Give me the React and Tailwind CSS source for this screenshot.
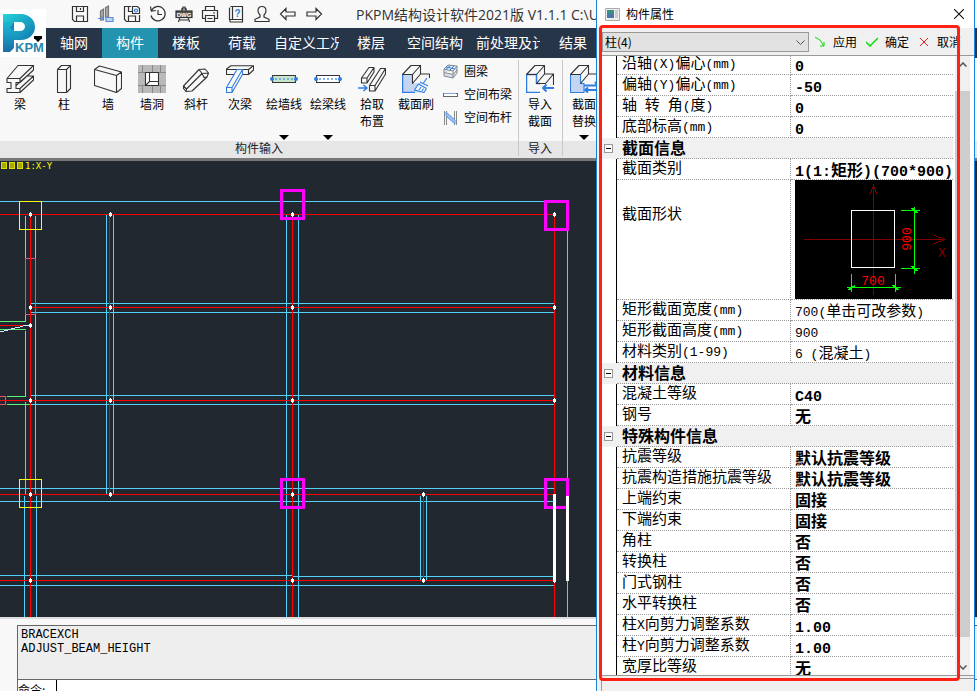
import React from "react";

const UI = "font-['Open_Sans','Noto_Sans_CJK_SC',sans-serif]";

/* ---------- quick access icons ---------- */

function Small({ children, label }) {
  return (
    <button aria-label={label} className="flex h-7 w-[26px] items-center justify-center">
      <svg width="18" height="18" viewBox="0 0 18 18" fill="none" stroke="#333" strokeWidth="1.2">
        {children}
      </svg>
    </button>
  );
}

function QuickAccess() {
  return (
    <div className="flex shrink-0 pl-[21px]">
      <Small label="保存">
        <path d="M1.5 1.5h15v15h-13l-2-2zM5.5 1.5v5h7v-5M5.5 16v-5h7v5M9.5 3v2" />
      </Small>
      <Small label="模型">
        <path d="M3.500 15V6l3-2v11zM8.500 12V2.500l3-1.500v11z" fill="#aaa" stroke="#777" />
        <path d="M1 13.500h5M4 11.500l2.500 2L4 15.500M9 12.500h7v4H9z" fill="#c3d5ec" stroke="#5a8fd6" />
      </Small>
      <Small label="另存">
        <path d="M8 1.5H1.5v13l2 2h13V10M5.500 1.500v5H9M5.500 16v-5h7v5" />
        <path d="M9.500 8.500V1.500h5l2 2v5z" />
        <circle cx="13" cy="5.500" r="1.500" stroke="#2f7de1" />
      </Small>
      <Small label="历史">
        <path d="M2.500 5.500a7.200 7.200 0 1 1-.5 5M1.500 1.500l.8 4.500 4.500-.5M9 5v4.500h4" />
      </Small>
      <Small label="DWG">
        <path d="M3.500 17L8 2h2l4.500 15M6 4h6M5 15h8" />
        <rect x="1" y="6" width="16" height="6.500" fill="#555" />
        <text x="9" y="11.500" fontSize="6" fontWeight="700" fill="#fff" stroke="none" textAnchor="middle" fontFamily="Liberation Sans">DWG</text>
      </Small>
      <Small label="打印">
        <path d="M4.500 5.500v-4h9v4M4.500 13.500h-3v-8h15v8h-3M4.500 10.500h9v6h-9zM6.500 13.500h5M12 8h2" />
      </Small>
      <Small label="帮助">
        <path d="M3.500 1.500h12v13h-12a1.500 1.500 0 0 0 0 2.500h12v-2M2.500 15V2.500M5.500 1.500v13" />
        <text x="10.500" y="11.500" fontSize="10" fontWeight="700" fill="#2f7de1" stroke="none" textAnchor="middle" fontFamily="Liberation Sans">?</text>
      </Small>
      <Small label="用户">
        <path d="M9 1.500c-3 0-4 2-4 4.200 0 2 1 3.300 2 4.300v2l-5 2.300v2.200h14v-2.200L11 12v-2c1-1 2-2.300 2-4.300 0-2.200-1-4.200-4-4.200z" />
      </Small>
      <Small label="撤销">
        <path d="M1.500 9l5.500-5.500V7h9v4H7v3.500z" />
      </Small>
      <Small label="重做">
        <path d="M16.500 9L11 3.500V7H2v4h9v3.500z" />
      </Small>
    </div>
  );
}

function Logo() {
  return (
    <button aria-label="PKPM" className="h-12 w-[46px] bg-white">
      <svg width="46" height="48" viewBox="0 0 46 48">
        <defs>
          <linearGradient id="pg" x1="0" y1="0" x2="0" y2="1">
            <stop offset="0" stopColor="#1fcbd6" />
            <stop offset=".5" stopColor="#1aa0c8" />
            <stop offset="1" stopColor="#1b6ea5" />
          </linearGradient>
          <linearGradient id="pb" x1="0" y1="0" x2="1" y2="1">
            <stop offset="0" stopColor="#25d3da" />
            <stop offset="1" stopColor="#1277b0" />
          </linearGradient>
        </defs>
        <path d="M3 5h11v34l-4 4H3z" fill="url(#pg)" />
        <path d="M3 5h18a14 13 0 0 1 0 26h-7v-9h6a5 4.500 0 0 0 0-9H3z" fill="url(#pb)" />
        <path d="M14 13v9l-4-3z" fill="#1588b8" />
        <text x="15" y="43" fontSize="13" fontWeight="700" fill="#2a86a8" fontFamily="Liberation Sans">KPM</text>
        <path d="M34 27h8v3h-1l-3 3-3-3h-1z" fill="#000" />
      </svg>
    </button>
  );
}

/* ---------- ribbon icons ---------- */

const I = {
  beam: (
    <path d="M1 13.500H14V17.500H10V23.500H14V27.500H1V23.500H5V17.500H1zM1 13.500L12 .5H27.500L14 13.500M27.500 .5V5L14 17.500M21 11H27.500L14 23.500M27.500 11V15L14 27.500M10 20.500L21 11V11" />
  ),
  column: <path d="M7.500 4.500H16.500V27.500H7.500zM7.500 4.500L11.500 .5H20.500L16.500 4.500M20.500 .5V23.500L16.500 27.500" />,
  wall: <path d="M.5 4.500L22.500 10.500V27.500L.5 20.500zM.5 4.500L5.500 1L27.500 7L22.500 10.500M27.500 7V23.500L22.500 27.500" />,
  hole: (
    <>
      <path d="M0 0H28V28H0z" fill="#b9b9b9" stroke="none" />
      <path d="M0 7.500H28M0 20.500H28M4.500 0V7M22.500 0V7M4.500 20V28M22.500 20V28M14.500 0V7M14.500 20V28" stroke="#888" strokeWidth="1" />
      <path d="M7.500 7.500H20.500V20.500H7.500z" fill="#fff" />
      <path d="M11.500 7.500V16.500H20.500M11.500 16.500L7.500 20.500" />
    </>
  ),
  brace: <path d="M1.500 21L17 4.500L23 4L26.500 8L25 12L10 26L4 26.500L1.500 23.500zM17 4.500L20 8.500L26.500 8M20 8.500L4.500 24L1.500 21M4.500 24L4 26.500M20 8.500L22 12.500L25 12" />,
  sub: (
    <>
      <path d="M.5 4L5 .8H27.500V5L22.500 9.500H.5zM.5 4.500H22.500L27.500 .8M22.500 4.500V9.500" />
      <path d="M.5 22.500L11 4.500H16.500V9.500L6 27.500H.5zM.5 22.500H6V27.500M6 22.500L16.500 4.500" stroke="#2f7de1" fill="#f8f8f8" />
    </>
  ),
  wallLine: (
    <>
      <rect x="2.500" y="10.500" width="23" height="7" fill="#c8e6c9" />
      <path d="M5 14H24" stroke="#5a9ae8" strokeWidth="1.500" strokeDasharray="2 2" />
      <circle cx="2" cy="14" r="2" fill="#2f7de1" stroke="none" />
      <circle cx="26" cy="14" r="2" fill="#2f7de1" stroke="none" />
    </>
  ),
  beamLine: (
    <>
      <rect x="2.500" y="10.500" width="23" height="7" fill="#fff" />
      <path d="M5 14H24" stroke="#5a9ae8" strokeWidth="1.500" strokeDasharray="2 2" />
      <circle cx="2" cy="14" r="2" fill="#2f7de1" stroke="none" />
      <circle cx="26" cy="14" r="2" fill="#2f7de1" stroke="none" />
    </>
  ),
  pick: (
    <>
      <path d="M3.500 13H9V18H3.500zM3.500 13L11 2.500H16L9 13M16 2.500V7L9 18" />
      <path d="M11.500 20.500H17V26H11.500zM11.500 20.500L22.500 3.500H27.500L17 20.500M27.500 3.500V9L17 26" />
      <path d="M0 23H8M5.500 20L9 23L5.500 26" stroke="#2f7de1" strokeWidth="1.600" />
    </>
  ),
  brush: (
    <>
      <path d="M.5 9.500H10.500V18.500L19 18V27.500H.5z" fill="#c3d5f0" stroke="none" />
      <path d="M.5 9.500V27.500H13" stroke="#2f7de1" strokeWidth="1.500" />
      <path d="M.5 9.500L9 .5H18.500L10.500 9.500zM18.500 .5V9L10.500 18.500V9.500M18.500 9H27.500V13" fill="#f8f8f8" />
      <path d="M16.500 19L24.500 23.500L22 27.500L12.500 25z" fill="#f8f8f8" stroke="none" />
      <path d="M25 13L21.500 18M18 17L26 21M16.500 19L24.500 23.500M16.500 19L12.500 25L22 27.500L24.500 23.500M17 25L19 22M20 26L21.500 23.500" stroke="#2f7de1" />
    </>
  ),
  import: (
    <>
      <path d="M.5 9.500H10.500V18.500H14M.5 9.500V27.500H14" stroke="#2f7de1" strokeWidth="1.500" />
      <path d="M.5 9.500L9 .5H18.500L10.500 9.500zM18.500 .5V9L10.500 18.500H19.500L27.500 9H18.500M27.500 9V20" />
      <path d="M28 23H17M20.500 19.500L17 23L20.500 26.500" stroke="#2f7de1" strokeWidth="2" />
    </>
  ),
  replace: (
    <>
      <path d="M.5 9.500H10.500V18.500H14V27.500H.5z" fill="#c3d5f0" stroke="#2f7de1" />
      <path d="M.5 9.500L9 .5H18.500L10.500 9.500zM18.500 .5V9L10.500 18.500M18.500 9H27.500" />
      <path d="M14 20.500H28M25 17L28 20.500M28 25H15M18 22.500L15 25L18 27.500" stroke="#2f7de1" strokeWidth="2" />
    </>
  ),
};

function Tool({ icon, label, arrow }) {
  return (
    <button className="flex h-full w-11 shrink-0 flex-col items-center pt-[7px] text-[12px] leading-[17px] text-black">
      <svg width="28" height="28" viewBox="0 0 28 28" fill="none" stroke="#333" strokeWidth="1.1" strokeLinejoin="round">
        {I[icon]}
      </svg>
      <span className="mt-[3px] whitespace-pre text-center">{label}</span>
      {arrow && <span className="mt-auto mb-[1px] border-x-[5px] border-t-[5px] border-x-transparent border-t-black" />}
    </button>
  );
}

function MiniTool({ label, children }) {
  return (
    <button className="flex h-[23px] items-center gap-[6px] text-[12px] leading-4 text-black">
      <svg width="15" height="16" viewBox="0 0 15 16" fill="none" stroke="#666">{children}</svg>
      {label}
    </button>
  );
}

function Group({ title, children }) {
  return (
    <section className="flex shrink-0 flex-col">
      <div className="flex h-[83px]">{children}</div>
      <div className="h-[17px] bg-[#e6e6e6] text-center text-[12px] leading-[16px] text-[#222]">{title}</div>
    </section>
  );
}

function Separator() {
  return <div className="z-10 my-[2px] -mr-px w-px shrink-0 bg-[#c8c8c8]" />;
}

function Ribbon() {
  return (
    <div className="flex h-[100px] shrink-0 overflow-hidden bg-[#f8f8f8]">
      <Group title="构件输入">
        <div className="-ml-[2px] flex">
          <Tool icon="beam" label="梁" />
          <Tool icon="column" label="柱" />
          <Tool icon="wall" label="墙" />
          <Tool icon="hole" label="墙洞" />
          <Tool icon="brace" label="斜杆" />
          <Tool icon="sub" label="次梁" />
          <Tool icon="wallLine" label="绘墙线" arrow />
          <Tool icon="beamLine" label="绘梁线" arrow />
          <Tool icon="pick" label={"拾取\n布置"} />
          <Tool icon="brush" label="截面刷" />
        </div>
        <div className="flex w-20 flex-col pt-[2px] pl-[5px]">
          <MiniTool label="圈梁">
            <path d="M1 5l4-4 9 1v7l-4 5-9-2zM1 5l9 2 4-5M10 7v7M1 8.500l9 2 4-4.500" fill="#d6e2f2" stroke="#888" />
            <path d="M3 5.500L7 1.500M6.500 6.500L11 2M3 3l9 2" stroke="#2f7de1" />
          </MiniTool>
          <MiniTool label="空间布梁">
            <rect x=".5" y="6.500" width="14" height="3" fill="#fff" />
            <path d="M1 6.500h12" stroke="#7fa6df" />
          </MiniTool>
          <MiniTool label="空间布杆">
            <path d="M1.500 1v14M3.500 1v14M11.500 1v14M13.500 1v14" stroke="#888" />
            <path d="M3 2l9 8v4L3 6z" fill="#9fc0ee" stroke="#5a9ae8" />
          </MiniTool>
        </div>
      </Group>
      <Separator />
      <Group title="导入">
        <Tool icon="import" label={"导入\n截面"} />
      </Group>
      <Separator />
      <Group title="">
        <Tool icon="replace" label={"截面\n替换"} arrow />
      </Group>
      <div className="mt-[83px] flex-1 bg-[#e6e6e6]" />
    </div>
  );
}

/* ---------- drawing canvas ---------- */

const CYAN = "M-1 201H545M30 303H554M30 312H554M30 395H554M30 404H554M-1 488H554M-1 501H554M-1 575H292M292 576H553M-1 585H554" +
  "M25 401V494M35 401V494M24 495V617M36 495V617M106 214V494M113 214V494M286 214V617M298 214V617M567 230V617M420 495V580M426 495V580";
const GREEN = "M25 215V258M35 215V258M25 314V321H-1M35 314V403M-1 329H25M25 330V396H6M6 404H30";
const PINK = "M25 258H35V314H25zM-1 396H5V404H-1";
const RED = "M-1 214H554M30 307H554M-1 325H30M-1 400H554M-1 494H554M-1 580H554M30 214V617M109 214V494M292 214V617M554 214V617M423 494V580";
const NODES = [
  [30, 214], [110, 214], [292, 214], [554, 214], [30, 307], [110, 307], [292, 307], [554, 307], [30, 325],
  [30, 400], [110, 400], [292, 400], [554, 400], [30, 494], [110, 494], [292, 494], [423, 494],
  [30, 580], [292, 580], [423, 580], [554, 580],
];

function Canvas() {
  return (
    <main className="flex-1 overflow-hidden border-t-[3px] border-t-[#777] bg-[#222830]">
      <svg width="100%" height="456" fill="none" shapeRendering="crispEdges">
        <g transform="translate(.5 -160.500)">
          <path d={CYAN} stroke="#55d0f8" />
          <path d={GREEN} stroke="#5cf577" />
          <path d={PINK} stroke="#f0506e" />
          <path d={RED} stroke="#f00" />
          <path d="M-1 331H1L6 330L12 328L18 327L24 325H30" stroke="#d5e8ff" />
          <path d="M19 201H41V229H19zM19 479H41V507H19z" stroke="#ff0" />
          <path d="M281 190H303V218H281zM545 201H567V229H545zM281 479H303V507H281zM545 479H567V507H545z" stroke="#f0f" strokeWidth="3" strokeLinejoin="round" />
          {NODES.map(([x, y]) => (
            <path key={x + "-" + y} d={`M${x - 1.5} ${y - 1.5}h3v3h-3zM${x - 0.5} ${y - 2.5}h1v5h-1z`} fill="#fff" />
          ))}
          <path d="M554 493V581M567 495V580" stroke="#fff" strokeWidth="3" />
          <path d="M1 162H6V168H1zM9 162H14V168H9zM17 162H22V168H17z" fill="#a8a800" stroke="#e0e000" />
        </g>
        <text x="25" y="8" fontSize="9" fill="#ff0" fontFamily="DejaVu Sans Mono, monospace">1:X-Y</text>
      </svg>
    </main>
  );
}

function CommandPanel() {
  return (
    <footer className="flex h-[74px] shrink-0 border-t-2 border-t-[#ddd] bg-[#f8f8f8] pt-[6px]">
      <div className="w-[17px] shrink-0 pt-[5px] pl-[3px]">
        <div className="h-full w-[6px] bg-[radial-gradient(#222_35%,transparent_40%)] bg-[length:2px_2px]" />
      </div>
      <div className="flex flex-1 flex-col border-t border-l border-[#666]">
        <div className="h-[53px] shrink-0 bg-[#eee] pt-[2px] pl-[3px] font-['Liberation_Mono',monospace] text-[12px] leading-[14px] text-black">
          <p>BRACEXCH</p>
          <p>ADJUST_BEAM_HEIGHT</p>
        </div>
        <div className="flex h-[22px] shrink-0 border-t border-[#666] bg-white text-[12px] leading-[20px]">
          <label htmlFor="cmd" className="w-[38px] font-['Noto_Sans_CJK_SC',sans-serif]">命令:</label>
          <input id="cmd" className="flex-1 border-l border-black outline-none" />
        </div>
      </div>
    </footer>
  );
}

/* ---------- property dialog ---------- */

/* Splits a string so that Latin runs are set in a fixed-width face beside full-width characters. */
function Mixed({ text, bold }) {
  return text.split(/([\x20-\x7e]+)/).filter(Boolean).map((run, i) =>
    /^[\x20-\x7e]/.test(run) ? (
      <span key={i} className={bold ? "font-['Liberation_Mono',monospace] text-[15px] leading-none" : "font-['Liberation_Mono',monospace] text-[13px] leading-none"}>{run}</span>
    ) : (
      <span key={i}>{run}</span>
    )
  );
}

const ROWS = [
  ["沿轴(X)偏心(mm)", "0", true],
  ["偏轴(Y)偏心(mm)", "-50", true],
  ["轴 转 角(度)", "0", true],
  ["底部标高(mm)", "0", true],
  ["截面信息"],
  ["截面类别", "1(1:矩形)(700*900)", true],
  ["截面形状", "shape"],
  ["矩形截面宽度(mm)", "700(单击可改参数)"],
  ["矩形截面高度(mm)", "900"],
  ["材料类别(1-99)", "6 (混凝土)"],
  ["材料信息"],
  ["混凝土等级", "C40", true],
  ["钢号", "无", true],
  ["特殊构件信息"],
  ["抗震等级", "默认抗震等级", true],
  ["抗震构造措施抗震等级", "默认抗震等级", true],
  ["上端约束", "固接", true],
  ["下端约束", "固接", true],
  ["角柱", "否", true],
  ["转换柱", "否", true],
  ["门式钢柱", "否", true],
  ["水平转换柱", "否", true],
  ["柱X向剪力调整系数", "1.00", true],
  ["柱Y向剪力调整系数", "1.00", true],
  ["宽厚比等级", "无", true],
];

function SectionShape() {
  return (
    <svg width="157" height="119" className="block bg-black" fill="none" shapeRendering="crispEdges">
      <g transform="translate(.5 .5)">
        <path d="M78 5V114M8 59H149M74 15L78 5L82 15M139 55L149 59L139 63" stroke="#800000" />
        <path d="M56 30H99V87H56z" stroke="#fff" />
        <path d="M119 26V93M105 30H124M105 88H124M51 107H105M56 93V111M100 93V111" stroke="#0f0" />
        <path d="M119 30l-3 -2h3zM119 30l3 2h-3zM119 88l-3 -2h3zM119 88l3 2h-3zM56 107l-3 2h3zM56 107l3 -2v2zM100 107l-3 -2h3zM100 107l3 2h-3z" fill="#0f0" stroke="#0f0" />
      </g>
      <g fontFamily="Liberation Mono, monospace" fontSize="13" textAnchor="middle">
        <text x="78" y="105" fill="#f00">700</text>
        <text x="116" y="59" fill="#f00" transform="rotate(-90 116 59)">900</text>
        <text x="147" y="77" fill="#800000">X</text>
      </g>
    </svg>
  );
}

function Grid() {
  const dotted = "border-b border-dotted border-b-[#999]";
  return (
    <table className="-mt-[2px] w-full table-fixed border-separate border-spacing-0 text-black">
      <colgroup>
        <col className="w-[15px]" />
        <col className="w-[174px]" />
        <col />
      </colgroup>
      <tbody>
        {ROWS.map(([name, value, bold]) =>
          value === undefined ? (
            <tr key={name} className="bg-[#f0f0f0]">
              <td className="p-0">
                <button aria-label={name} className="ml-[2px] flex h-[9px] w-[9px] items-center justify-center border border-[#999] bg-white">
                  <span className="h-px w-[5px] bg-black" />
                </button>
              </td>
              <th colSpan={2} className={`${dotted} p-0 pl-[5px] text-left text-[16px] font-bold`}>
                <div className="h-5 leading-[18px]">{name}</div>
              </th>
            </tr>
          ) : (
            <tr key={name}>
              <td className="border-r border-black p-0" />
              <th scope="row" className={`${dotted} border-r border-r-[#999] p-0 pl-[5px] text-left text-[15px] font-normal whitespace-nowrap`}>
                {value === "shape" ? (
                  <div className="h-[119px] pt-[24px] leading-[18px]">{name}</div>
                ) : (
                  <div className="h-5 leading-[16px]"><Mixed text={name} /></div>
                )}
              </th>
              {value === "shape" ? (
                <td className={`${dotted} p-0 pl-[4px]`}><SectionShape /></td>
              ) : (
                <td className={`${dotted} p-0 pl-[4px] whitespace-nowrap ${bold ? "text-[16px] font-bold" : "text-[15px]"}`}>
                  <div className="h-5 leading-[20px]"><Mixed text={value} bold={bold} /></div>
                </td>
              )}
            </tr>
          )
        )}
      </tbody>
    </table>
  );
}

function Action({ label, children }) {
  return (
    <button className="flex shrink-0 items-center gap-[7px] whitespace-nowrap">
      <svg width="12" height="12" viewBox="0 0 12 12" fill="none">{children}</svg>
      {label}
    </button>
  );
}

function PropertyDialog() {
  return (
    <aside className="absolute top-0 right-[2px] flex h-full w-[379px] flex-col border-x border-[#1883d7] bg-[#f0f0f0] font-['Noto_Sans_CJK_SC',sans-serif] text-[12px] text-black">
      <header className="flex h-7 shrink-0 items-center bg-white pr-[10px] pl-2">
        <svg width="15" height="13" viewBox="0 0 15 13">
          <path d="M.5 .5h14v12H.5z" fill="#eee" stroke="#aaa" />
          <path d="M2 2h7v8H2z" fill="#3c8f84" />
          <path d="M2 6h7v4H2z" fill="#4a77a8" />
          <path d="M10 2h3v8h-3z" fill="#ccc" />
        </svg>
        <h1 className="ml-[6px] flex-1">构件属性</h1>
        <button aria-label="关闭">
          <svg width="10" height="10" viewBox="0 0 10 10" stroke="#111" strokeWidth="1.100"><path d="M0 0L10 10M10 0L0 10" /></svg>
        </button>
      </header>
      <div className="flex h-[27px] shrink-0 items-center pl-[5px]">
        <div className="relative w-[207px] shrink-0">
          <select aria-label="构件" className="h-5 w-full appearance-none border border-[#999] bg-[#e1e1e1] pl-[2px] text-[12px] leading-[18px]">
            <option>柱(4)</option>
          </select>
          <svg width="9" height="6" viewBox="0 0 9 6" fill="none" stroke="#555" className="pointer-events-none absolute top-[8px] right-[4px]"><path d="M.5 .5L4.500 4.500L8.500 .5" /></svg>
        </div>
        <div className="ml-[5px] flex gap-[9px]">
          <Action label="应用"><path d="M1 1l5 3 4 6M6 10h4V6" stroke="#0d0" /></Action>
          <Action label="确定"><path d="M0 6l4 4 8-8" stroke="#0d0" strokeWidth="1.500" /></Action>
          <Action label="取消"><path d="M2 2l8 8M10 2l-8 8" stroke="#d22" /></Action>
        </div>
      </div>
      <div className="ml-[5px] flex h-[621px] shrink-0 border-y border-y-[#999] bg-white">
        <div className="min-w-0 flex-1 overflow-hidden pr-[2px]">
          <Grid />
        </div>
        <div className="mr-[4px] flex w-[15px] shrink-0 flex-col items-center bg-[#f0f0f0]">
          <svg width="8" height="5" viewBox="0 0 8 5" fill="none" stroke="#555" strokeWidth="1.500" className="mt-[6px]"><path d="M.5 4.500L4 1L7.500 4.500" /></svg>
          <div className="mt-[24px] h-[546px] w-full shrink-0 bg-[#cdcdcd]" />
          <svg width="8" height="5" viewBox="0 0 8 5" fill="none" stroke="#555" strokeWidth="1.500" className="mt-auto mb-[5px]"><path d="M.5 .5L4 4L7.500 .5" /></svg>
        </div>
      </div>
      <div className="mt-[2px] ml-[4px] flex-1 border-t border-l border-[#999]" />
      <div className="pointer-events-none absolute top-[25px] left-[2px] h-[656px] w-[361px] rounded-[4px] border-[3px] border-[#ff2016]" />
    </aside>
  );
}

/* ---------- main window ---------- */

const TABS = [
  ["轴网", "w-14"], ["构件", "w-14 bg-[#2393af]"], ["楼板", "w-14"], ["荷载", "w-14"], ["自定义工况", "w-[73px] px-[4px]"],
  ["楼层", "w-14"], ["空间结构", "w-[72px]"], ["前处理及计算", "w-[74px] px-[5px]"], ["结果", "w-14"],
];

export default function App() {
  return (
    <div className={`relative flex h-screen flex-col overflow-hidden bg-[#f8f8f8] ${UI}`}>
      <header className="flex h-[58px] shrink-0">
        <div className="w-[46px] shrink-0 pt-[9px]"><Logo /></div>
        <div className="min-w-0 flex-1">
          <div className="flex h-7 items-center overflow-hidden">
            <QuickAccess />
            <h2 className="ml-[29px] text-[14px] whitespace-nowrap text-[#333]">PKPM结构设计软件2021版 V1.1.1 C:\Users</h2>
          </div>
          <nav className="flex h-[30px] bg-[#273549] text-[14px] leading-[30px] text-white">
            {TABS.map(([t, cls]) => (
              <button key={t} className={`shrink-0 ${cls}`}>
                <span className="block overflow-hidden text-center whitespace-nowrap">{t}</span>
              </button>
            ))}
          </nav>
        </div>
      </header>
      <Ribbon />
      <Canvas />
      <CommandPanel />
      <PropertyDialog />
    </div>
  );
}
